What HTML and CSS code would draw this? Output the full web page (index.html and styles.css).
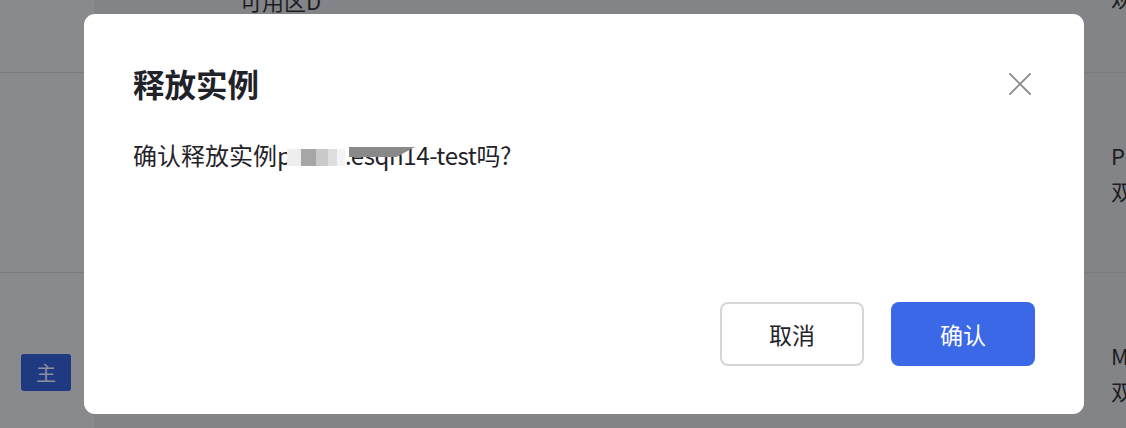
FILE: index.html
```html
<!DOCTYPE html>
<html lang="zh-CN">
<head>
<meta charset="utf-8">
<title>释放实例</title>
<link rel="stylesheet" href="styles.css">
</head>
<body>
<div class="table">
  <div class="row row-first">
    <div class="cell-fixed"></div>
    <div class="cell-main">
      <div class="col col-zone"><span>华东1(杭州)</span><span>可用区D</span></div>
      <div class="col col-right"><span>P</span><span>观</span></div>
    </div>
  </div>
  <div class="row">
    <div class="cell-fixed"></div>
    <div class="cell-main">
      <div class="col col-zone"></div>
      <div class="col col-right"><span>P</span><span>双</span></div>
    </div>
  </div>
  <div class="row">
    <div class="cell-fixed"><span class="badge">主</span></div>
    <div class="cell-main">
      <div class="col col-zone"></div>
      <div class="col col-right"><span>M</span><span>双</span></div>
    </div>
  </div>
</div>

<div class="overlay">
  <div class="modal" role="dialog">
    <div class="modal-head">
      <h2 class="modal-title">释放实例</h2>
      <button class="modal-close" aria-label="关闭">
        <svg width="22" height="22" viewBox="0 0 22 22"><path d="M1 1 L21 21 M21 1 L1 21" stroke="#8a8b8f" stroke-width="1.8" fill="none" stroke-linecap="square"/></svg>
      </button>
    </div>
    <p class="modal-body">确认释放实例p<span class="mosaic"></span><span class="tail">.esqn14-test吗?</span></p>
    <div class="modal-foot">
      <button class="btn btn-cancel">取消</button>
      <button class="btn btn-primary">确认</button>
    </div>
  </div>
</div>
</body>
</html>
```

FILE: styles.css
```css
* { box-sizing: border-box; }
html { overflow: hidden; }
html, body { margin: 0; padding: 0; }
body {
  width: 1126px;
  height: 428px;
  overflow: hidden;
  background: #838488;
  font-family: "Noto Sans CJK SC", "Noto Sans", sans-serif;
  color: #1c1d22;
}

.table { margin-top: -127px; }
.row {
  display: flex;
  height: 200px;
  border-bottom: 1px solid #7a7b7f;
}
.cell-fixed {
  width: 94px;
  flex: none;
  background: #898a8e;
  display: flex;
  align-items: center;
  padding-left: 21px;
}
.cell-main {
  flex: 1;
  display: flex;
  align-items: center;
}
.col {
  display: flex;
  flex-direction: column;
  font-size: 22px;
  line-height: 35px;
}
.col-zone { margin-left: 146px; width: 200px; padding-top: 20px; }
.col-right { margin-left: auto; width: 15px; overflow: hidden; white-space: nowrap; }
.row-first .col-right { padding-top: 14px; }

.badge {
  display: inline-flex;
  align-items: center;
  justify-content: center;
  width: 50px;
  height: 37px;
  border-radius: 3px;
  background: #1f3a80;
  color: #8a8fa3;
  font-size: 20px;
}

.overlay {
  position: fixed;
  inset: 0;
  display: flex;
  justify-content: flex-start;
  padding-top: 14px;
  padding-left: 84px;
}
.modal {
  width: 1000px;
  height: 400px;
  background: #ffffff;
  border-radius: 11px;
  padding: 49px 49px 48px 49px;
  display: flex;
  flex-direction: column;
}
.modal-head {
  display: flex;
  align-items: center;
  justify-content: space-between;
  height: 40px;
}
.modal-title {
  margin: 0;
  font-size: 31.5px;
  line-height: 40px;
  font-weight: 700;
  color: #1f2329;
}
.modal-close {
  border: 0;
  background: none;
  padding: 0;
  width: 22px;
  height: 22px;
  margin-right: 4px;
  margin-top: 2px;
  display: flex;
}
.modal-body {
  margin: 34px 0 0;
  font-size: 24px;
  line-height: 36px;
  color: #1f2329;
  white-space: nowrap;
}
.mosaic {
  display: inline-block;
  width: 58px;
  height: 17px;
  margin-left: -5px;
  vertical-align: -1px;
  background: linear-gradient(90deg,
    #eeeeee 0 14px,
    #a6a6a6 14px 29px,
    #c9c9c9 29px 41px,
    #dedede 41px 50px,
    #f4f4f4 50px 58px);
}
.tail {
  position: relative;
  letter-spacing: -0.4px;
}
.tail::before {
  content: "";
  position: absolute;
  left: 4px;
  top: 10px;
  width: 66px;
  height: 10px;
  background: #898989;
  clip-path: polygon(0 0, 100% 0, 72% 100%, 0 100%);
}
.modal-foot {
  margin-top: auto;
  display: flex;
  justify-content: flex-end;
  gap: 27px;
}
.btn {
  width: 144px;
  height: 64px;
  border-radius: 8px;
  font-family: inherit;
  font-size: 23px;
  cursor: pointer;
}
.btn-cancel {
  background: #fff;
  border: 2px solid #d3d5d9;
  color: #1f2329;
}
.btn-primary {
  background: #3a68e6;
  border: 0;
  color: #ffffff;
}
```
